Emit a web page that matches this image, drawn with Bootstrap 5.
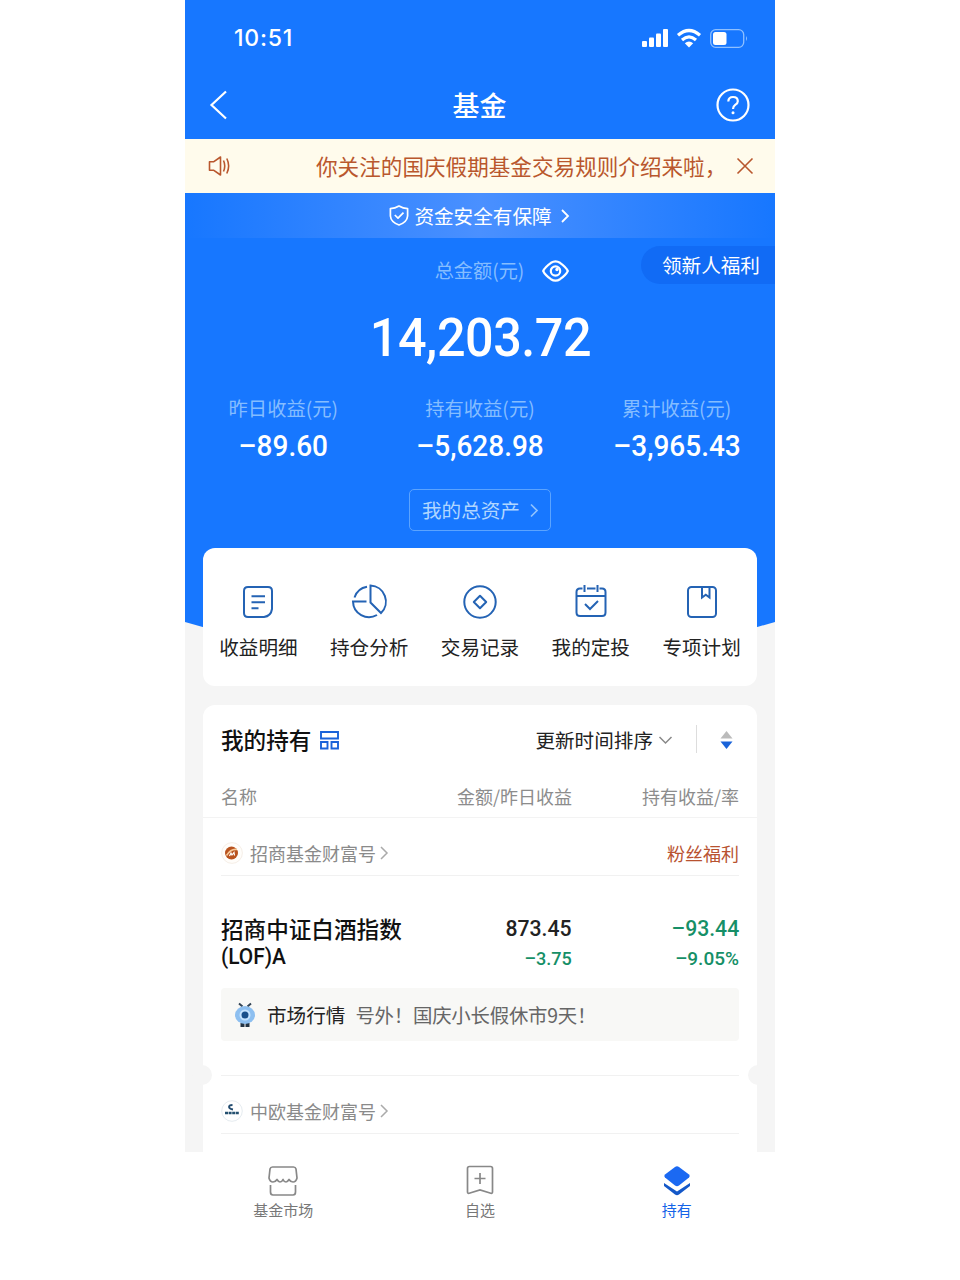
<!DOCTYPE html>
<html lang="zh-CN">
<head>
<meta charset="utf-8">
<meta name="viewport" content="width=device-width, initial-scale=1">
<title>基金</title>
<link href="https://cdn.jsdelivr.net/npm/bootstrap@5.3.0/dist/css/bootstrap.min.css" rel="stylesheet">
<style>
body{background:#fff;font-family:"Noto Sans CJK SC",sans-serif;font-size:19.6px;line-height:1;color:#222;white-space:nowrap}
svg{display:block;flex:none;fill:none;overflow:visible}
.phone{width:590px;height:1280px;background:#f5f5f5;overflow:hidden}
.blue{background:#1777ff}
.statusbar{height:76px;padding:0 27px 0 49px}
.clock{font:500 23px/1 Inter,sans-serif;letter-spacing:.8px}
.bars{fill:#fff}
.titlebar{height:63px;padding:0 25px 5px 24px}
.titlebar h1{font-size:27px;font-weight:500}
.notice{height:54px;background:#fffbec;color:#b9572d;padding:0 22px 1px 23px;font-size:21.6px}
.notice-text{margin-left:86px;line-height:30px;width:411px}
.safe{height:45px;background:linear-gradient(90deg,#1777ff,#4a90ff 50%,#1777ff);gap:5px;padding-right:1px}
.hero{height:310px}
.soft{color:#85bdff}
.digits{font-family:Roboto,sans-serif;font-weight:500}
.slim{display:inline-block;transform:scaleX(.95)}
.slim-end{transform-origin:right}
.slim-start{transform-origin:left}
.total-row{height:66px;padding-left:44px;gap:18px;font-size:19.2px}
.welfare{right:0;top:8px;height:38px;width:134px;padding-left:21px;border-radius:19px 0 0 19px;background:#116bf5;color:#fff;font-size:19.6px}
.amount{height:69px;font-size:53px;letter-spacing:-.5px}
.stat-label{height:38px;font-size:19.3px}
.stat-value{height:36px;font-size:29px}
.stat-value .slim{transform:scaleX(.965)}
.stats{margin-top:17px}
.asset-btn{width:142px;height:42px;margin-top:25px;border:1px solid #5ba4ff;border-radius:5px;color:#b0d6ff;padding-left:12px;gap:11px}
.quick-wrap{padding:0 18px}
.quick-wrap::before{content:"";position:absolute;left:0;right:0;top:-1px;height:96px;background:#1777ff;clip-path:polygon(0 0,100% 0,100% 75px,97% 80px,50% 96px,3% 80px,0 75px)}
.quick{height:138px;border-radius:12px;background:#fff;padding-top:36px}
.quick svg{height:36px;stroke:#2463b4;stroke-width:2}
.quick span{margin-top:17px}
.panel{margin:19px 18px 0;height:447px;background:#fff;border-radius:12px 12px 0 0}
.inset{padding:0 18px}
.hold-head{height:71px}
.sort-text{padding-bottom:2px}
.strong{font-size:22.6px;font-weight:500;color:#111}
.cols{height:42px;font-size:18px;color:#8c8c8c;border-bottom:1px solid #f3f3f3;padding-bottom:2px}
.col-rate{width:167px}
.gray{color:#8a8a8a;font-size:18px}
.account{height:58px;border-bottom:1px solid #f1f1f1;gap:7px;padding-top:12px}
.account .chev{margin-left:-3px}
.fans{color:#b85230;font-size:18px}
.fund{height:112px;padding-top:39px}
.fund-name{line-height:28px;width:200px}
.latin{font-family:Roboto,sans-serif;font-size:22px;line-height:28px;height:28px}
.amount-col{width:151px}
.num1{font-size:22.3px;line-height:26px}
.num2{font-size:19px;line-height:36px}
.green{color:#168f67}
.news{height:53px;background:#f8f8f6;border-radius:4px;padding-left:14px;gap:10px;color:#666}
.news b{font-weight:400;color:#222}
.news-text{font-size:19.4px;letter-spacing:-.2px}
.split{height:35px;border-bottom:1px solid #f1f1f1}
.notch{width:20px;height:20px;border-radius:50%;background:#f5f5f5;bottom:-9px}
.notch-l{left:-11px}
.notch-r{right:-11px}
.tabs{height:128px;background:#fff;font-size:15px;color:#777;padding-top:12px}
.tabs svg{height:32px}
.tabs span{margin-top:6px}
.on{color:#1464e8}
</style>
</head>
<body>
<main class="phone mx-auto d-flex flex-column">
  <header class="blue text-white">
    <div class="statusbar d-flex justify-content-between align-items-center">
      <span class="clock">10:51</span>
      <div class="d-flex align-items-center">
        <svg class="bars" width="27" height="18"><rect y="12" width="5" height="6" rx="1"/><rect x="7" y="8.500" width="5" height="9.500" rx="1"/><rect x="14" y="4.500" width="5" height="13.500" rx="1"/><rect x="21" y="0" width="5" height="18" rx="1"/></svg>
        <svg class="ms-2" width="24" height="19" stroke="#fff" stroke-width="3.200"><path d="M1 6.200Q12-3.200 23 6.200M5 11Q12 4.800 19 11"/><path d="M12 18.500L7.800 14.300Q12 10.800 16.200 14.300Z" fill="#fff" stroke="none"/></svg>
        <svg class="ms-2" width="39" height="19"><rect x="1.700" y=".7" width="33" height="17.600" rx="5" stroke="#8fc0ff" stroke-width="1.300"/><rect x="4" y="3" width="13.500" height="13" rx="2.500" fill="#fff"/><path d="M37 7Q39 9.500 37 12Z" fill="#8fc0ff"/></svg>
      </div>
    </div>
    <div class="titlebar d-flex justify-content-between align-items-center">
      <svg width="34" height="30" stroke="#fff" stroke-width="2.200"><path d="M17 1.500L2.500 15L17 28.500"/></svg>
      <h1 class="m-0">基金</h1>
      <svg width="34" height="34" stroke="#fff" stroke-width="2.200"><circle cx="17" cy="17" r="15.500"/><path d="M12.300 13.500Q12.500 9 17 9Q21.800 9 21.800 13.200Q21.800 15.200 19.200 16.900Q17 18.400 17 21"/><circle cx="17" cy="24.800" r="1.500" fill="#fff" stroke="none"/></svg>
    </div>
  </header>

  <section class="notice d-flex align-items-center">
    <svg width="22" height="20" stroke="currentColor" stroke-width="1.600"><path d="M1.500 5.800H5.500L12.500 1V19L5.500 14.200H1.500Z" stroke-linejoin="round"/><path d="M15.500 4.500Q18 10 15.500 15.500M18.800 2.500Q22.500 10 18.800 17.500"/></svg>
    <div class="notice-text d-flex"><span>你关注的国庆假期基金交易规则介绍来啦</span><span>，</span></div>
    <svg class="ms-auto" width="16" height="16" stroke="currentColor" stroke-width="1.600"><path d="M.5.500L15.500 15.500M15.500.500L.500 15.500"/></svg>
  </section>

  <section class="blue text-white">
    <div class="safe d-flex justify-content-center align-items-center">
      <svg width="20" height="21" stroke="#fff" stroke-width="1.700" stroke-linejoin="round"><path d="M10 1Q14 3.500 18.600 3.600V11Q18.200 17 10 20Q1.800 17 1.400 11V3.600Q6 3.500 10 1Z"/><path d="M5.800 10L9 13.200L14.500 7.700"/></svg>
      <span>资金安全有保障</span>
      <svg class="ms-1" width="9" height="14" stroke="#fff" stroke-width="1.800"><path d="M1 1L7 7L1 13"/></svg>
    </div>
    <div class="hero position-relative d-flex flex-column align-items-center">
      <div class="total-row w-100 d-flex align-items-center justify-content-center soft">
        <span>总金额(元)</span>
        <svg width="27" height="22" stroke="#fff" stroke-width="2.200"><path d="M1.200 11Q3 7 9 2.800Q13.500 0 18 2.800Q24 7 25.800 11Q24 15 18 19.200Q13.500 22 9 19.200Q3 15 1.200 11Z"/><circle cx="13.500" cy="11" r="4.700"/><circle cx="15" cy="9.500" r="1.700" fill="#fff" stroke="none"/></svg>
      </div>
      <span class="welfare position-absolute d-flex align-items-center">领新人福利</span>
      <div class="amount digits d-flex align-items-center"><span class="slim">14,203.72</span></div>
      <div class="stats row g-0 w-100 text-center">
        <div class="col-4"><div class="stat-label soft d-flex align-items-center justify-content-center">昨日收益(元)</div><div class="stat-value digits d-flex align-items-center justify-content-center"><span class="slim">–89.60</span></div></div>
        <div class="col-4"><div class="stat-label soft d-flex align-items-center justify-content-center">持有收益(元)</div><div class="stat-value digits d-flex align-items-center justify-content-center"><span class="slim">–5,628.98</span></div></div>
        <div class="col-4"><div class="stat-label soft d-flex align-items-center justify-content-center">累计收益(元)</div><div class="stat-value digits d-flex align-items-center justify-content-center"><span class="slim">–3,965.43</span></div></div>
      </div>
      <div class="asset-btn d-flex align-items-center"><span>我的总资产</span><svg width="8" height="13" stroke="#8fc2ff" stroke-width="1.700"><path d="M0 .500L6 6.500L0 12.500"/></svg></div>
    </div>
  </section>

  <section class="quick-wrap position-relative">
    <div class="quick position-relative row g-0 row-cols-5">
      <div class="col d-flex flex-column align-items-center"><svg width="36"><path d="M8 3H28Q32 3 32 7V25Q31 32 24 33H8Q4 33 4 29V7Q4 3 8 3Z"/><path d="M11.500 12.200H25M11.500 18.200H25M11.500 24.200H18.500"/></svg><span>收益明细</span></div>
      <div class="col d-flex flex-column align-items-center"><svg width="36"><path d="M19.500 1.500A16 16 0 0 1 30 29L19.500 18.500Z"/><path d="M16 2.800A16 16 0 0 0 3.500 13.500M15.500 17.500H2A16 16 0 0 0 26 31"/></svg><span>持仓分析</span></div>
      <div class="col d-flex flex-column align-items-center"><svg width="36"><circle cx="18" cy="18" r="15.700"/><path d="M18 11.800L24.200 18L18 24.200L11.800 18Z" stroke-linejoin="round"/></svg><span>交易记录</span></div>
      <div class="col d-flex flex-column align-items-center"><svg width="36"><path d="M9.500 4.500H7Q3.500 4.500 3.500 8V28.500Q3.500 32 7 32H29Q32.500 32 32.500 28.500V8Q32.500 4.500 29 4.500H26.500M14 4.500H22.500M11.500 1V8M24.500 1V8M3.500 12H32.500M12 20L17 25L25 17"/></svg><span>我的定投</span></div>
      <div class="col d-flex flex-column align-items-center"><svg width="36"><rect x="4" y="3" width="28" height="30" rx="3.500"/><path d="M18 3V13.500L21.800 10.800L25.500 13.500V3" /></svg><span>专项计划</span></div>
    </div>
  </section>

  <section class="panel">
    <div class="hold-head inset d-flex align-items-center">
      <span class="strong">我的持有</span>
      <svg class="ms-2" width="20" height="19" stroke="#1a63d9" stroke-width="1.900"><path d="M2 1H19V7.500H2ZM2 11H8.500V17.500H2ZM12.500 11H19V17.500H12.500Z"/></svg>
      <span class="ms-auto sort-text">更新时间排序</span>
      <svg class="ms-1" width="15" height="8" stroke="#888" stroke-width="1.500"><path d="M2.500 0L8.500 6L14.500 0"/></svg>
      <svg class="ms-4" width="1" height="28"><path d="M.5-2V26" stroke="#ddd"/></svg>
      <svg class="ms-4 me-2" width="10" height="19"><path d="M5.500 0L11.500 7.500H-.5Z" fill="#bbb"/><path d="M-.5 10.500H11.500L5.500 18Z" fill="#1a63d9"/></svg>
    </div>
    <div class="cols inset d-flex align-items-center"><span>名称</span><span class="ms-auto">金额/昨日收益</span><span class="text-end col-rate">持有收益/率</span></div>
    <div class="inset">
      <div class="account d-flex align-items-center">
        <svg width="22" height="22"><circle cx="11" cy="11" r="10.400" fill="#fffdfa" stroke="#f6efe8"/><circle cx="10.500" cy="11" r="6.500" fill="#b9531e"/><path d="M5.500 13.500Q10 6.500 16 7.500" stroke="#f7c998" stroke-width="1.500"/><path d="M8.500 14L10 11L11 13L13 10.500L13.500 13.500" stroke="#fff" stroke-width="1.200"/></svg>
        <span class="gray">招商基金财富号</span>
        <svg class="chev" width="8" height="14" stroke="#aaa" stroke-width="1.500"><path d="M1 1L7 7L1 13"/></svg>
        <span class="ms-auto fans">粉丝福利</span>
      </div>
      <div class="fund d-flex">
        <div class="strong fund-name"><div>招商中证白酒指数</div><div class="latin"><span class="slim slim-start">(LOF)A</span></div></div>
        <div class="digits text-end amount-col"><div class="num1"><span class="slim slim-end">873.45</span></div><div class="num2 green"><span class="slim slim-end">–3.75</span></div></div>
        <div class="digits text-end green ms-auto"><div class="num1"><span class="slim slim-end">–93.44</span></div><div class="num2"><span>–9.05%</span></div></div>
      </div>
      <div class="news d-flex align-items-center">
        <svg width="22" height="28"><path d="M4 2.500L7.500 5.500M16 2.500L12.500 5.500" stroke="#345" stroke-width="2"/><path d="M7.500 26V22M12.500 26V22" stroke="#234" stroke-width="4"/><ellipse cx="10" cy="14" rx="10" ry="9" fill="#8dbff0"/><circle cx="10" cy="14" r="5.500" fill="#c5e3ff"/><circle cx="10" cy="14" r="3.500" fill="#194f8b"/></svg>
        <b>市场行情</b><span class="news-text">号外！国庆小长假休市9天！</span>
      </div>
    </div>
    <div class="position-relative inset"><div class="split"></div><i class="notch notch-r position-absolute"></i><i class="notch notch-l position-absolute"></i></div>
    <div class="inset">
      <div class="account d-flex align-items-center">
        <svg width="22" height="22"><circle cx="11" cy="11" r="10.300" fill="#fff" stroke="#e6ecf0"/><path d="M11.500 5Q8 5 8 7Q8.500 9 12 9.500" stroke="#234c70" stroke-width="1.800"/><path d="M4 13H18" stroke="#24506f" stroke-width="2.600" stroke-dasharray="3 .6"/></svg>
        <span class="gray">中欧基金财富号</span>
        <svg class="chev" width="8" height="14" stroke="#aaa" stroke-width="1.500"><path d="M1 1L7 7L1 13"/></svg>
      </div>
    </div>
  </section>

  <nav class="tabs row g-0 text-center">
    <div class="col-4 d-flex flex-column align-items-center"><svg width="30" stroke="#888" stroke-width="1.700" stroke-linejoin="round"><path d="M4.500 3H25.500Q27.500 3 28 5L29 14Q28 18 25 18Q22.500 18 21 15.500Q19.500 18 18 18Q16 18 15 15.500Q14 18 12 18Q10.500 18 9 15.500Q7.500 18 5 18Q2 18 1 14L2 5Q2.500 3 4.500 3ZM2.500 21V28Q2.500 31 5 31H25Q27.500 31 27.500 28V21"/></svg><span>基金市场</span></div>
    <div class="col-4 d-flex flex-column align-items-center"><svg width="30" stroke="#888" stroke-width="1.700"><path d="M4.500 2.500H25.500Q27.500 2.500 27.500 4.500V28Q27.500 30 25 29L15 26L5 29Q2.500 30 2.500 28V4.500Q2.500 2.500 4.500 2.500ZM15 9V20M9.500 14.500H20.500"/></svg><span>自选</span></div>
    <div class="col-4 d-flex flex-column align-items-center on"><svg width="30"><path d="M13 3Q15 1.500 17 3L27 10.500Q28.500 12 27 13.500L17 21.500Q15 23 13 21.500L3 13.500Q1.500 12 3 10.500Z" fill="#1b69f2"/><path d="M2 19V22L13 30.500Q15 32 17 30.500L28 22V19L15 27.500Z" fill="#1458c8"/></svg><span>持有</span></div>
  </nav>
</main>
<script src="https://cdn.jsdelivr.net/npm/bootstrap@5.3.0/dist/js/bootstrap.bundle.min.js"></script>
</body>
</html>
